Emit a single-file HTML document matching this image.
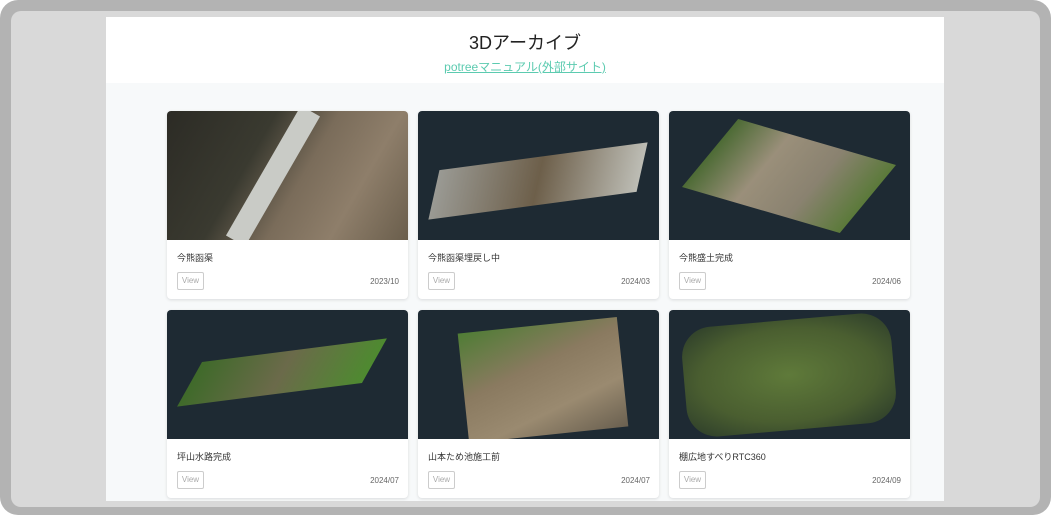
<!DOCTYPE html>
<html><head><meta charset="utf-8"><style>
*{margin:0;padding:0;box-sizing:border-box}
body{width:1051px;height:518px;background:#fff;font-family:"Liberation Sans","Noto Sans CJK JP",sans-serif;overflow:hidden;position:relative}
.outer{position:absolute;left:0;top:0;width:1051px;height:515px;background:#b3b3b3;border-radius:18px}
.inner{position:absolute;left:11px;top:11px;width:1029px;height:496px;background:#d9d9d9;border-radius:10px;overflow:hidden}
.page{position:absolute;left:95px;top:6px;width:838px;height:484px;background:#f7f9fa}
.hdr{height:66px;background:#fff;text-align:center}
.hdr h1{font-weight:normal;font-size:18px;color:#222;padding-top:16px;line-height:20px}
.hdr a{display:block;font-size:12px;color:#5ccbb0;text-decoration:underline;margin-top:5px}
.card{position:absolute;width:241px;height:188px;background:#fff;border-radius:4px;box-shadow:0 1px 3px rgba(0,0,0,.12);overflow:hidden}
.img{height:129px;background:#1e2a33;position:relative;overflow:hidden}
.t{position:absolute;left:10px;top:140px;font-size:9px;color:#333}
.v{position:absolute;left:10px;top:161px;width:27px;height:18px;border:1px solid #ccc;border-radius:2px;font-size:8px;color:#aaa;text-align:center;line-height:16px}
.d{position:absolute;right:9px;top:166px;font-size:8px;color:#666}
</style></head><body>
<div class="outer"></div>
<div class="inner"><div class="page">
<div class="hdr"><h1>3Dアーカイブ</h1><a>potreeマニュアル(外部サイト)</a></div>
</div></div>

<div class="card" style="left:167px;top:111px"><div class="img" style="background:linear-gradient(120deg,#2c2b25 0%,#3a3a30 35%,#7a6c5a 55%,#8e7e6a 75%,#6a5e4c 100%)">
<div style="position:absolute;left:95px;top:-10px;width:22px;height:150px;background:#c9cbc6;transform:rotate(30deg)"></div></div>
<div class="t">今熊函渠</div><div class="v">View</div><div class="d">2023/10</div></div>

<div class="card" style="left:418px;top:111px"><div class="img">
<div style="position:absolute;left:20px;top:45px;width:200px;height:50px;background:linear-gradient(90deg,#9a9a94,#6d5f4a,#bdbdb5);transform:skewX(-20deg) rotate(-8deg)"></div></div>
<div class="t">今熊函渠埋戻し中</div><div class="v">View</div><div class="d">2024/03</div></div>

<div class="card" style="left:669px;top:111px"><div class="img">
<div style="position:absolute;left:25px;top:30px;width:190px;height:70px;background:linear-gradient(90deg,#4d6b35,#9a8f7a,#8a8270,#5b7a3a);transform:skewX(-30deg) rotate(14deg)"></div></div>
<div class="t">今熊盛土完成</div><div class="v">View</div><div class="d">2024/06</div></div>

<div class="card" style="left:167px;top:310px"><div class="img">
<div style="position:absolute;left:30px;top:40px;width:170px;height:45px;background:linear-gradient(90deg,#3f6a2a,#6b6a4a,#4e8a30);transform:skewX(-35deg) rotate(-8deg)"></div></div>
<div class="t">坪山水路完成</div><div class="v">View</div><div class="d">2024/07</div></div>

<div class="card" style="left:418px;top:310px"><div class="img">
<div style="position:absolute;left:45px;top:15px;width:160px;height:110px;background:linear-gradient(160deg,#4f7d35,#8a7a60 40%,#9a8a70 70%,#6a6050);transform:rotate(-6deg)"></div></div>
<div class="t">山本ため池施工前</div><div class="v">View</div><div class="d">2024/07</div></div>

<div class="card" style="left:669px;top:310px"><div class="img">
<div style="position:absolute;left:15px;top:10px;width:210px;height:110px;background:radial-gradient(ellipse at center,#5f7a3a,#4a5e30 60%,#2a3a2a 100%);border-radius:30px;transform:rotate(-5deg)"></div></div>
<div class="t">棚広地すべりRTC360</div><div class="v">View</div><div class="d">2024/09</div></div>

<div style="position:absolute;left:106px;top:501px;width:838px;height:6px;background:#d9d9d9"></div>
</body></html>
